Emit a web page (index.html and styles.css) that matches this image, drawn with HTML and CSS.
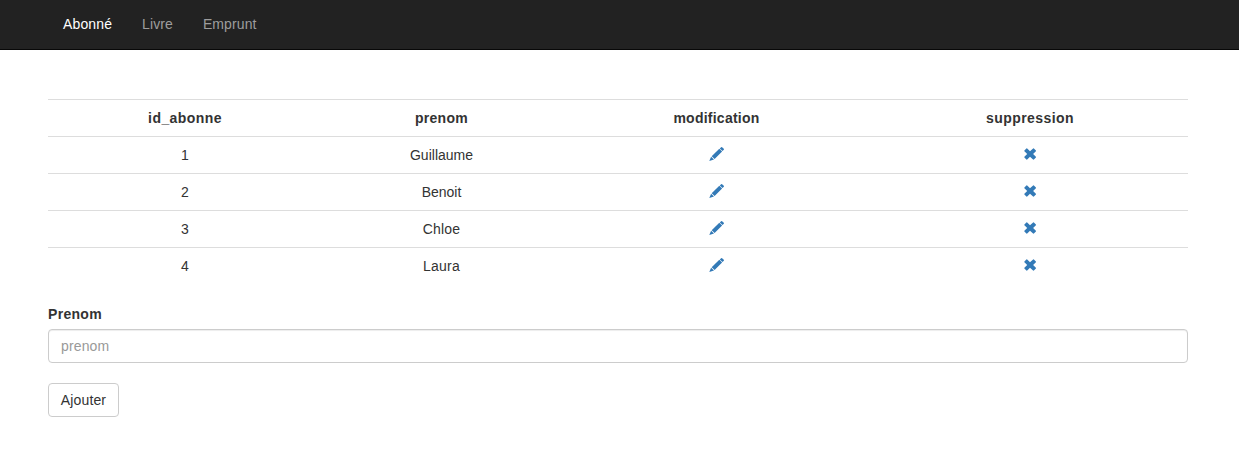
FILE: index.html
```html
<!DOCTYPE html>
<html lang="fr">
<head>
<meta charset="utf-8">
<title>Abonné</title>
<link rel="stylesheet" href="styles.css">
</head>
<body>
<svg class="sprite" aria-hidden="true">
<symbol id="pencil" viewBox="0 0 15 14"><path d="M12.1.2q.5-.4 1 0l1.7 1.6q.4.5 0 1L13.5 4.1 10.8 1.4zM10.3 1.8L13.1 4.6 5.6 12 2.7 9.2zM2.1 9.8l2.9 2.8L.3 14z"/></symbol>
<symbol id="remove" viewBox="0 0 14 14"><path d="M12.9 4.2L10.1 7l2.8 2.8q.3.4 0 .8l-2 2q-.4.3-.8 0L7 9.8l-2.8 2.8q-.4.3-.8 0l-2-2q-.3-.4 0-.8L4.2 7 1.4 4.2q-.3-.4 0-.8l2-2q.4-.3.8 0L7 4.2l3.1-2.8q.4-.3.8 0l2 2q.3.4 0 .8z"/></symbol>
</svg>
<nav class="navbar"><a class="active" href="#">Abonné</a><a href="#">Livre</a><a href="#">Emprunt</a></nav>
<main class="container">
<table class="table">
<tr><th class="c1">id_abonne</th><th class="c2">prenom</th><th class="c3">modification</th><th>suppression</th></tr>
<tr><td>1</td><td>Guillaume</td><td><svg class="icon pencil"><use href="#pencil"/></svg></td><td><svg class="icon"><use href="#remove"/></svg></td></tr>
<tr><td>2</td><td>Benoit</td><td><svg class="icon pencil"><use href="#pencil"/></svg></td><td><svg class="icon"><use href="#remove"/></svg></td></tr>
<tr><td>3</td><td class="wide">Chloe</td><td><svg class="icon pencil"><use href="#pencil"/></svg></td><td><svg class="icon"><use href="#remove"/></svg></td></tr>
<tr><td>4</td><td class="wide">Laura</td><td><svg class="icon pencil"><use href="#pencil"/></svg></td><td><svg class="icon"><use href="#remove"/></svg></td></tr>
</table>
<form>
<label for="prenom">Prenom</label>
<input class="field" id="prenom" type="text" placeholder="prenom">
<button class="btn" type="button">Ajouter</button>
</form>
</main>
</body>
</html>
```
FILE: styles.css
```css
* { box-sizing: border-box; }
body { margin: 0; font: 14px/20px "Liberation Sans", Arial, sans-serif; color: #333; background: #fff; }
.sprite { display: none; }
.navbar { display: flex; height: 50px; padding-left: 48px; background: #222; border-bottom: 1px solid #080808; }
.navbar a { padding: 14px 15px 15px; color: #9d9d9d; text-decoration: none; letter-spacing: .1px; }
.navbar .active { color: #fff; letter-spacing: .13px; }
.container { width: 1140px; margin: 49px 0 0 48px; }
.table { width: 100%; table-layout: fixed; border-collapse: separate; border-spacing: 0; margin-bottom: 20px; }
.table th, .table td { height: 37px; padding: 8px; border-top: 1px solid #ddd; text-align: center; line-height: 20px; }
.table th { letter-spacing: .42px; }
.table .c2 { letter-spacing: .3px; }
.table .c3 { letter-spacing: .25px; }
.wide { letter-spacing: .2px; }
.c1 { width: 274px; }
.c2 { width: 239px; }
.c3 { width: 311px; }
.icon { display: inline-block; width: 14px; height: 14px; fill: #337ab7; vertical-align: -1px; }
.pencil { width: 15px; }
label { display: block; margin-bottom: 5px; font-weight: bold; letter-spacing: .3px; }
.field { display: block; width: 100%; height: 34px; margin-bottom: 20px; padding: 6px 12px; font: inherit; border: 1px solid #ccc; border-radius: 4px; box-shadow: inset 0 1px 1px rgba(0,0,0,.075); }
.field::placeholder { color: #999; opacity: 1; letter-spacing: .15px; }
.btn { display: block; width: 71px; height: 34px; padding: 6px 0; font: inherit; letter-spacing: .13px; color: #333; background: #fff; border: 1px solid #ccc; border-radius: 4px; }
```
